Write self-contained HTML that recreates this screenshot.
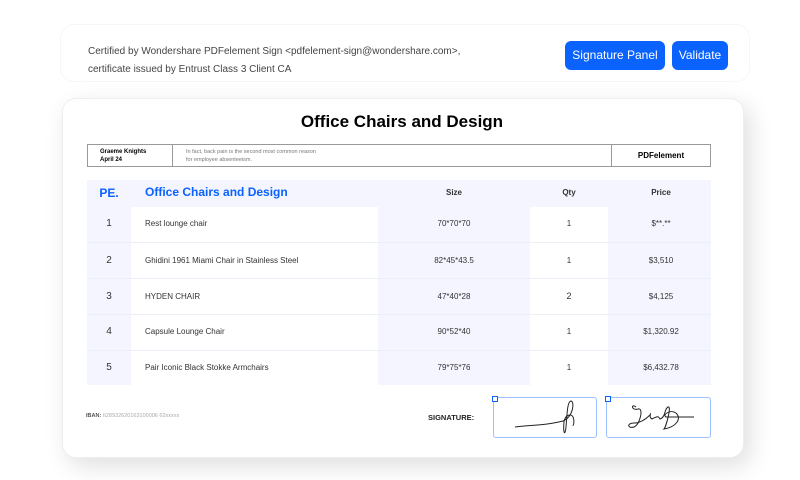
<!DOCTYPE html>
<html><head><style>
body{margin:0;width:800px;height:480px;background:#fff;font-family:"Liberation Sans",sans-serif;position:relative;overflow:hidden}
.abs{position:absolute}
.banner{left:60px;top:24px;width:688px;height:56px;border-radius:14px;border:1px solid #f6f6f6;background:#fff}
.cert{left:88px;top:43px;font-size:10px;color:#444;line-height:18px}
.btn{background:#0a62ff;color:#fff;font-size:12px;border-radius:6px;text-align:center;line-height:29px;height:29px;top:41px}
.card{left:62px;top:98px;width:680px;height:358px;border-radius:14px;background:#fff;box-shadow:6px 8px 24px rgba(0,0,0,.13);border:1px solid #eee}
.t{font-size:11px;color:#333;text-align:center}
</style></head><body>
<div class="abs banner"></div>
<div class="abs cert">Certified by Wondershare PDFelement Sign &lt;pdfelement-sign@wondershare.com&gt;,<br>certificate issued by Entrust Class 3 Client CA</div>
<div class="abs btn" style="left:565px;width:100px">Signature Panel</div>
<div class="abs btn" style="left:672px;width:56px">Validate</div>
<div class="abs card"></div>
<div class="abs" style="left:62px;width:680px;top:112px;text-align:center;font-size:17px;font-weight:bold;color:#000">Office Chairs and Design</div>
<div class="abs" style="left:87px;top:144px;width:622px;height:21px;border:1px solid #999"></div>
<div class="abs" style="left:172px;top:144px;width:1px;height:23px;background:#999"></div>
<div class="abs" style="left:611px;top:144px;width:1px;height:23px;background:#999"></div>
<div class="abs" style="left:100px;top:148px;font-size:6px;font-weight:bold;line-height:8px">Graeme Knights<br>April 24</div>
<div class="abs" style="left:186px;top:148px;font-size:5.5px;color:#777;line-height:8px">In fact, back pain is the second most common reason<br>for employee absenteeism.</div>
<div class="abs" style="left:612px;width:98px;top:151px;font-size:8px;font-weight:bold;text-align:center">PDFelement</div>
<div class="abs" style="left:87px;top:180px;width:624px;height:205px;background:#f4f5fe"></div>
<div class="abs" style="left:131px;top:207px;width:247px;height:178px;background:#fff"></div>
<div class="abs" style="left:530px;top:207px;width:78px;height:178px;background:#fff"></div>
<div class="abs" style="left:87px;top:242px;width:624px;height:1px;background:#eceef8"></div>
<div class="abs" style="left:87px;top:278px;width:624px;height:1px;background:#eceef8"></div>
<div class="abs" style="left:87px;top:314px;width:624px;height:1px;background:#eceef8"></div>
<div class="abs" style="left:87px;top:350px;width:624px;height:1px;background:#eceef8"></div>
<div class="abs" style="left:87px;width:44px;top:186px;font-size:12px;font-weight:bold;color:#0a62ff;text-align:center">PE.</div>
<div class="abs" style="left:145px;top:185px;font-size:12px;font-weight:bold;color:#0a62ff">Office Chairs and Design</div>
<div class="abs t" style="left:378px;width:152px;top:188px;font-size:8px;font-weight:bold">Size</div>
<div class="abs t" style="left:530px;width:78px;top:188px;font-size:8px;font-weight:bold">Qty</div>
<div class="abs t" style="left:611px;width:100px;top:188px;font-size:8px;font-weight:bold">Price</div>
<div style="font-size:8px;color:#333">
<div class="abs t" style="left:87px;width:44px;top:218px;font-size:10px">1</div><div class="abs" style="left:145px;top:219px">Rest lounge chair</div><div class="abs t" style="left:378px;width:152px;top:219px;font-size:8px">70*70*70</div><div class="abs t" style="left:530px;width:78px;top:219px;font-size:8px">1</div><div class="abs t" style="left:611px;width:100px;top:219px;font-size:8px">$**.**</div>
<div class="abs t" style="left:87px;width:44px;top:255px;font-size:10px">2</div><div class="abs" style="left:145px;top:256px">Ghidini 1961 Miami Chair in Stainless Steel</div><div class="abs t" style="left:378px;width:152px;top:256px;font-size:8px">82*45*43.5</div><div class="abs t" style="left:530px;width:78px;top:256px;font-size:8px">1</div><div class="abs t" style="left:611px;width:100px;top:256px;font-size:8px">$3,510</div>
<div class="abs t" style="left:87px;width:44px;top:291px;font-size:10px">3</div><div class="abs" style="left:145px;top:292px">HYDEN CHAIR</div><div class="abs t" style="left:378px;width:152px;top:292px;font-size:8px">47*40*28</div><div class="abs t" style="left:530px;width:78px;top:291px;font-size:9px">2</div><div class="abs t" style="left:611px;width:100px;top:292px;font-size:8px">$4,125</div>
<div class="abs t" style="left:87px;width:44px;top:326px;font-size:10px">4</div><div class="abs" style="left:145px;top:327px">Capsule Lounge Chair</div><div class="abs t" style="left:378px;width:152px;top:327px;font-size:8px">90*52*40</div><div class="abs t" style="left:530px;width:78px;top:327px;font-size:8px">1</div><div class="abs t" style="left:611px;width:100px;top:327px;font-size:8px">$1,320.92</div>
<div class="abs t" style="left:87px;width:44px;top:362px;font-size:10px">5</div><div class="abs" style="left:145px;top:363px">Pair Iconic Black Stokke Armchairs</div><div class="abs t" style="left:378px;width:152px;top:363px;font-size:8px">79*75*76</div><div class="abs t" style="left:530px;width:78px;top:363px;font-size:8px">1</div><div class="abs t" style="left:611px;width:100px;top:363px;font-size:8px">$6,432.78</div>
</div>
<div class="abs" style="left:86px;top:413px;font-size:5.5px;color:#555"><b>IBAN:</b> <span style="color:#aaa">It28932620163100006 62xxxxx</span></div>
<div class="abs" style="left:428px;top:413px;font-size:7.5px;font-weight:bold;color:#222">SIGNATURE:</div>
<div class="abs" style="left:493px;top:397px;width:102px;height:39px;border:1px solid #9cc0ff;border-radius:3px"></div>
<div class="abs" style="left:606px;top:397px;width:103px;height:39px;border:1px solid #9cc0ff;border-radius:3px"></div>
<div class="abs" style="left:492px;top:396px;width:4px;height:4px;border:1px solid #0a62ff;background:#fff"></div>
<div class="abs" style="left:605px;top:396px;width:4px;height:4px;border:1px solid #0a62ff;background:#fff"></div>
<svg class="abs" style="left:493px;top:397px" width="104" height="41" viewBox="0 0 104 41"><path d="M22 30 C40 28,55 28,70 24 C80 20,82 5,78 4 C74 4,74 20,73 30 C72 40,70 36,71 25 C72 18,78 16,80 20 C82 24,80 30,80 28" fill="none" stroke="#222" stroke-width="1"/></svg>
<svg class="abs" style="left:606px;top:397px" width="104" height="41" viewBox="0 0 104 41"><path d="M30 10 C25 6,25 14,32 12 C38 10,34 28,28 30 C22 32,20 26,28 26 C34 26,40 22,44 18 C46 14,42 20,46 22 C50 20,52 18,54 22 C60 20,58 12,62 10 C66 8,60 30,58 32 C70 30,76 22,70 16 C64 12,56 18,60 20 L88 20" fill="none" stroke="#222" stroke-width="1"/></svg>
</body></html>
